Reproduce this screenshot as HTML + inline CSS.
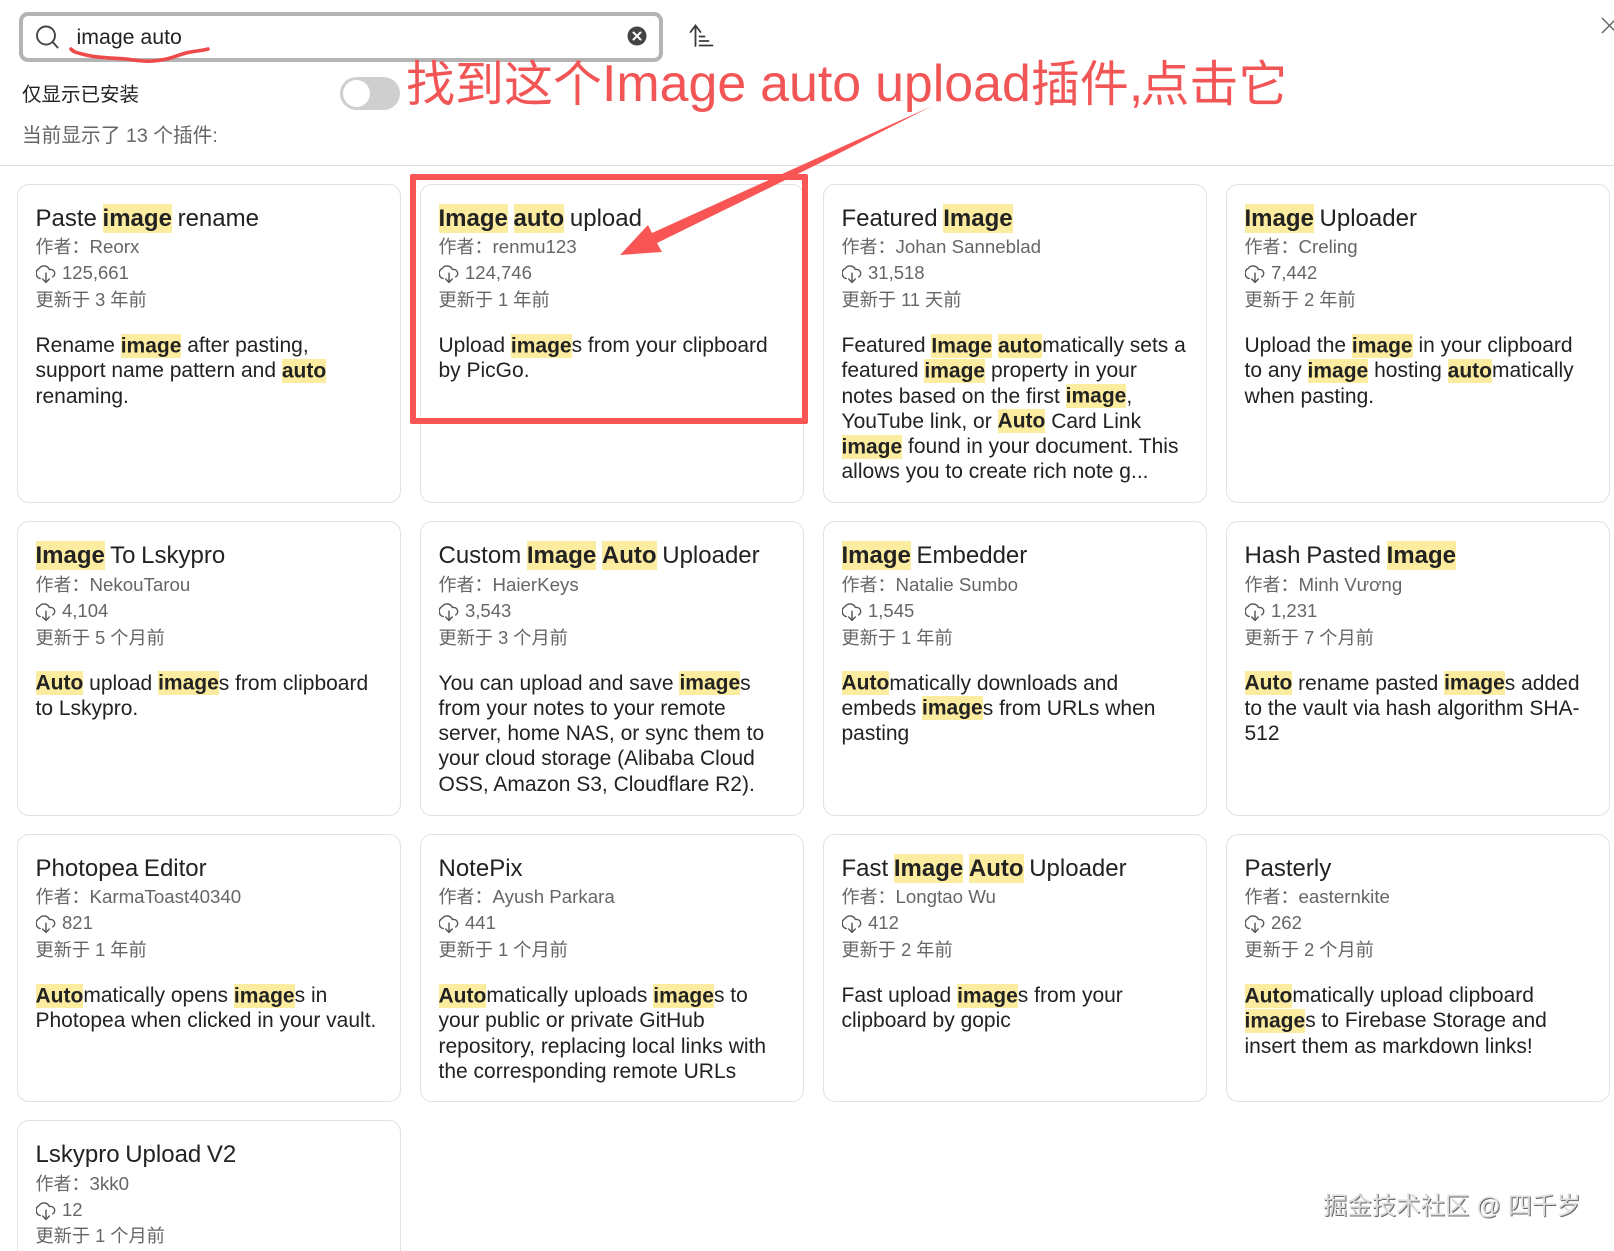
<!DOCTYPE html>
<html lang="zh">
<head>
<meta charset="utf-8">
<title>Plugins</title>
<style>
html,body{margin:0;padding:0;background:#fff;width:1614px;height:1251px;overflow:hidden}
#w{position:absolute;left:0;top:0;width:1614px;height:1251px;overflow:hidden;font-family:"Liberation Sans","Noto Sans CJK SC",sans-serif;color:#222;background:#fff}
.abs{position:absolute;white-space:nowrap}
.card{position:absolute;width:384px;box-sizing:border-box;border:1px solid #e2e2e2;border-radius:12px;background:#fff}
.card>*{position:absolute;left:18px;white-space:nowrap}
.t{font-size:24px;word-spacing:-1px;line-height:34px;color:#222}
.a{font-size:18.7px;line-height:28px;color:#666}
.a i{font-style:normal;font-size:18px}
.d{left:44.5px!important;font-size:18.5px;line-height:28px;color:#666}
.u{font-size:18.2px;line-height:28px;color:#666}
.p{font-size:21px;line-height:25.3px;color:#222}
.ic{width:20px;height:20px;fill:none;stroke:#555;stroke-width:1.7;stroke-linecap:round;stroke-linejoin:round}
b{background:#fcec9f;font-weight:700;color:#222}
.t b{padding:1px 0}
.p b{padding:.5px 0}
.r1{top:184px;height:319px}
.r2{top:521px;height:295px}
.r3{top:834px;height:268px}
.r4{top:1120px;height:131px;border-bottom:0;border-radius:12px 12px 0 0}
.r1 .t{top:16.5px}.r1 .a{top:48px}.r1 .d{top:74px}.r1 .u{top:100.5px}.r1 .p{top:148px}.r1 .ic{top:79px}
.r2 .t{top:17px}.r2 .a{top:49px}.r2 .d{top:75px}.r2 .u{top:101.5px}.r2 .p{top:148.5px}.r2 .ic{top:79.5px}
.r3 .t{top:17px}.r3 .a{top:48px}.r3 .d{top:74px}.r3 .u{top:100.5px}.r3 .p{top:148px}.r3 .ic{top:78.5px}
.r4 .t{top:17px}.r4 .a{top:49px}.r4 .d{top:75px}.r4 .u{top:101.5px}.r4 .ic{top:79.5px}
.c1{left:16.5px}.c2{left:419.5px}.c3{left:822.5px}.c4{left:1225.5px}
</style>
</head>
<body>
<div id="w">
<svg width="0" height="0" style="position:absolute">
<symbol id="dl" viewBox="0 0 24 24"><path d="M5 17.5A6.6 6.6 0 0 1 4 5.2 7 7 0 0 1 16 6.5h1.5a4.8 4.8 0 0 1 2.6 8.9"/><path d="M12 11v11"/><path d="M8 18l4 4 4-4"/></symbol>
</svg>

<!-- search bar -->
<div class="abs" style="left:19px;top:12px;width:644px;height:50px;box-sizing:border-box;border:4px solid #b4b4b4;border-radius:9px;background:#fff"></div>
<svg class="abs" style="left:34px;top:24px" width="26" height="26" viewBox="0 0 26 26" fill="none" stroke="#444" stroke-width="1.9" stroke-linecap="round"><circle cx="12" cy="11.5" r="9"/><path d="M18.6 18l5 5.5"/></svg>
<div class="abs" style="left:76.5px;top:22px;font-size:21.3px;line-height:30px;color:#222">image auto</div>
<svg class="abs" style="left:627px;top:26px" width="20" height="20" viewBox="0 0 20 20"><circle cx="10" cy="10" r="9.5" fill="#444"/><path d="M6.5 6.5l7 7M13.5 6.5l-7 7" stroke="#fff" stroke-width="2" stroke-linecap="round"/></svg>
<svg class="abs" style="left:685px;top:22px" width="32" height="28" viewBox="685 22 32 28" fill="none" stroke="#3a3a3a" stroke-width="1.8" stroke-linecap="round"><path d="M695.5 26v20M690.5 32l5-6.5 5 6.5"/><path d="M699.5 36.5h5M699.5 41h9M699.5 45.5h13"/></svg>
<svg class="abs" style="left:0;top:0" width="260" height="70" fill="none"><path d="M71 49c3 4 9 4 15 6 12 3 28 3 40 4 9 1 17 3 27 2 15-1 22-5 33-8 7-2 15-2 22-4" stroke="#ee4a4a" stroke-width="3.6" stroke-linecap="round"/></svg>

<!-- filter -->
<div class="abs" style="left:22px;top:81px;font-size:19.5px;line-height:28px;color:#222">仅显示已安装</div>
<div class="abs" style="left:340px;top:77px;width:60px;height:33px;border-radius:17px;background:#cfcfcf"></div>
<div class="abs" style="left:343px;top:80px;width:27px;height:27px;border-radius:50%;background:#fff"></div>
<div class="abs" style="left:22px;top:122px;font-size:19.7px;line-height:28px;color:#666">当前显示了 13 个插件:</div>
<div class="abs" style="left:0;top:165px;width:1614px;height:1px;background:#dedede"></div>

<!-- close -->
<svg class="abs" style="left:1600px;top:16px" width="14" height="18" fill="none" stroke="#666" stroke-width="1.5"><path d="M2 2l15 15M17 2L2 17"/></svg>

<!-- cards -->
<div class="card r1 c1"><div class="t">Paste <b>image</b> rename</div><div class="a"><i>作者：</i>Reorx</div><svg class="ic"><use href="#dl"/></svg><div class="d">125,661</div><div class="u">更新于 3 年前</div><div class="p">Rename <b>image</b> after pasting,<br>support name pattern and <b>auto</b><br>renaming.</div></div>
<div class="card r1 c2"><div class="t"><b>Image</b> <b>auto</b> upload</div><div class="a"><i>作者：</i>renmu123</div><svg class="ic"><use href="#dl"/></svg><div class="d">124,746</div><div class="u">更新于 1 年前</div><div class="p">Upload <b>image</b>s from your clipboard<br>by PicGo.</div></div>
<div class="card r1 c3"><div class="t">Featured <b>Image</b></div><div class="a"><i>作者：</i>Johan Sanneblad</div><svg class="ic"><use href="#dl"/></svg><div class="d">31,518</div><div class="u">更新于 11 天前</div><div class="p">Featured <b>Image</b> <b>auto</b>matically sets a<br>featured <b>image</b> property in your<br>notes based on the first <b>image</b>,<br>YouTube link, or <b>Auto</b> Card Link<br><b>image</b> found in your document. This<br>allows you to create rich note g...</div></div>
<div class="card r1 c4"><div class="t"><b>Image</b> Uploader</div><div class="a"><i>作者：</i>Creling</div><svg class="ic"><use href="#dl"/></svg><div class="d">7,442</div><div class="u">更新于 2 年前</div><div class="p">Upload the <b>image</b> in your clipboard<br>to any <b>image</b> hosting <b>auto</b>matically<br>when pasting.</div></div>

<div class="card r2 c1"><div class="t"><b>Image</b> To Lskypro</div><div class="a"><i>作者：</i>NekouTarou</div><svg class="ic"><use href="#dl"/></svg><div class="d">4,104</div><div class="u">更新于 5 个月前</div><div class="p"><b>Auto</b> upload <b>image</b>s from clipboard<br>to Lskypro.</div></div>
<div class="card r2 c2"><div class="t">Custom <b>Image</b> <b>Auto</b> Uploader</div><div class="a"><i>作者：</i>HaierKeys</div><svg class="ic"><use href="#dl"/></svg><div class="d">3,543</div><div class="u">更新于 3 个月前</div><div class="p">You can upload and save <b>image</b>s<br>from your notes to your remote<br>server, home NAS, or sync them to<br>your cloud storage (Alibaba Cloud<br>OSS, Amazon S3, Cloudflare R2).</div></div>
<div class="card r2 c3"><div class="t"><b>Image</b> Embedder</div><div class="a"><i>作者：</i>Natalie Sumbo</div><svg class="ic"><use href="#dl"/></svg><div class="d">1,545</div><div class="u">更新于 1 年前</div><div class="p"><b>Auto</b>matically downloads and<br>embeds <b>image</b>s from URLs when<br>pasting</div></div>
<div class="card r2 c4"><div class="t">Hash Pasted <b>Image</b></div><div class="a"><i>作者：</i>Minh Vương</div><svg class="ic"><use href="#dl"/></svg><div class="d">1,231</div><div class="u">更新于 7 个月前</div><div class="p"><b>Auto</b> rename pasted <b>image</b>s added<br>to the vault via hash algorithm SHA-<br>512</div></div>

<div class="card r3 c1"><div class="t">Photopea Editor</div><div class="a"><i>作者：</i>KarmaToast40340</div><svg class="ic"><use href="#dl"/></svg><div class="d">821</div><div class="u">更新于 1 年前</div><div class="p"><b>Auto</b>matically opens <b>image</b>s in<br>Photopea when clicked in your vault.</div></div>
<div class="card r3 c2"><div class="t">NotePix</div><div class="a"><i>作者：</i>Ayush Parkara</div><svg class="ic"><use href="#dl"/></svg><div class="d">441</div><div class="u">更新于 1 个月前</div><div class="p"><b>Auto</b>matically uploads <b>image</b>s to<br>your public or private GitHub<br>repository, replacing local links with<br>the corresponding remote URLs</div></div>
<div class="card r3 c3"><div class="t">Fast <b>Image</b> <b>Auto</b> Uploader</div><div class="a"><i>作者：</i>Longtao Wu</div><svg class="ic"><use href="#dl"/></svg><div class="d">412</div><div class="u">更新于 2 年前</div><div class="p">Fast upload <b>image</b>s from your<br>clipboard by gopic</div></div>
<div class="card r3 c4"><div class="t">Pasterly</div><div class="a"><i>作者：</i>easternkite</div><svg class="ic"><use href="#dl"/></svg><div class="d">262</div><div class="u">更新于 2 个月前</div><div class="p"><b>Auto</b>matically upload clipboard<br><b>image</b>s to Firebase Storage and<br>insert them as markdown links!</div></div>

<div class="card r4 c1"><div class="t">Lskypro Upload V2</div><div class="a"><i>作者：</i>3kk0</div><svg class="ic"><use href="#dl"/></svg><div class="d">12</div><div class="u" style="line-height:26px">更新于 1 个月前</div></div>

<!-- annotations -->
<div class="abs" style="left:410px;top:174px;width:398px;height:250px;box-sizing:border-box;border:6.5px solid #f95555;border-radius:2px"></div>
<svg class="abs" style="left:0;top:0" width="1614" height="300"><polygon points="932,106 813,160 652,233 648,225 620,255 662,252 657,243 822,162" fill="#f95555"/></svg>
<div class="abs" style="left:406px;top:51px;height:64px;line-height:64px;color:#f25555;font-size:49px">找到这个<span style="font-size:51.9px;word-spacing:-.5px">Image auto upload</span>插件<span style="font-size:52px;margin-right:-3px">,</span>点击它</div>

<!-- watermark -->
<div class="abs" style="left:1323px;top:1191px;font-size:24.4px;line-height:32px;color:#dedede;text-shadow:1px 1px 0 #6a6a6a,-.5px -.5px 0 #fff">掘金技术社区 @ 四千岁</div>
</div>
</body>
</html>
